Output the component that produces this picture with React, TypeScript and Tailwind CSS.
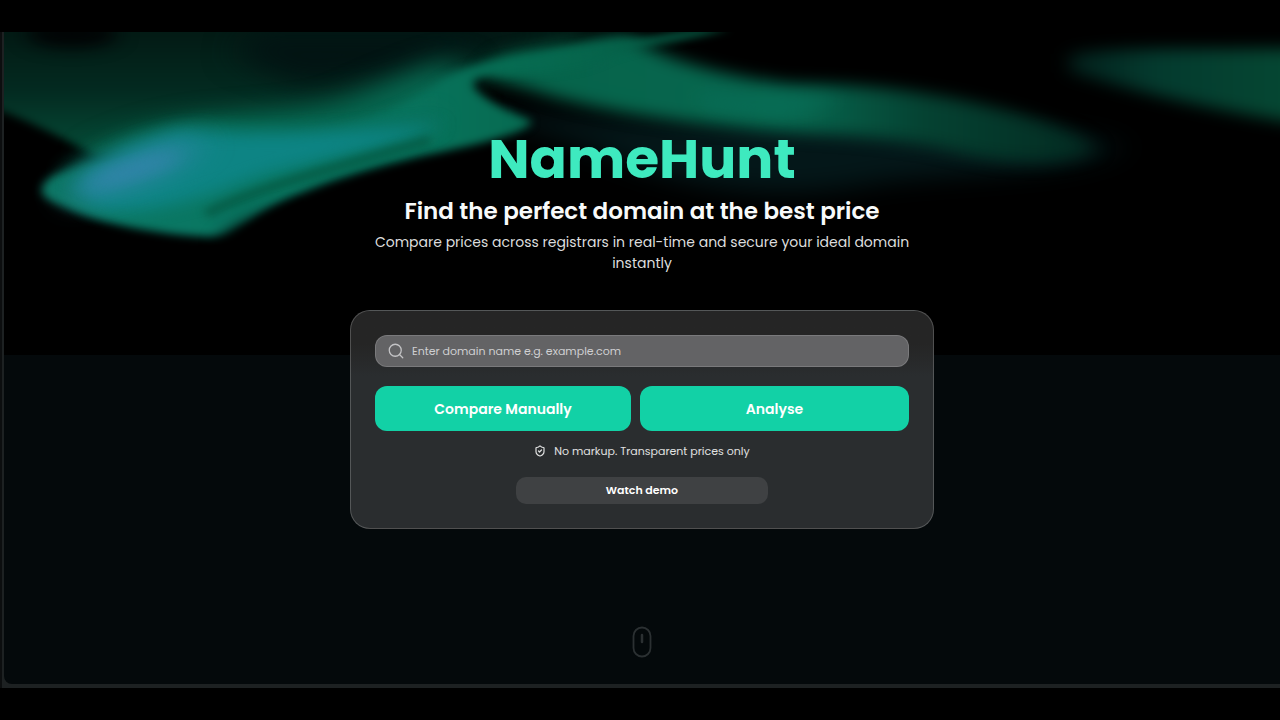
import { Search, ShieldCheck } from "lucide-react";

function Aurora() {
  return (
    <svg
      aria-hidden="true"
      className="absolute inset-x-0 top-0 h-[323px] w-full bg-black"
      viewBox="4 32 1276 323"
      preserveAspectRatio="none"
    >
      <defs>
        <filter id="b4" x="-20%" y="-50%" width="140%" height="200%" colorInterpolationFilters="sRGB">
          <feGaussianBlur stdDeviation="5 4" />
        </filter>
        <filter id="b8" x="-30%" y="-80%" width="160%" height="260%" colorInterpolationFilters="sRGB">
          <feGaussianBlur stdDeviation="10 8" />
        </filter>
        <filter id="b14" x="-50%" y="-100%" width="200%" height="300%" colorInterpolationFilters="sRGB">
          <feGaussianBlur stdDeviation="18 12" />
        </filter>
        <linearGradient id="veil" x1="0" y1="32" x2="0" y2="150" gradientUnits="userSpaceOnUse">
          <stop offset="0" stopColor="#031a14" />
          <stop offset="0.5" stopColor="#032a20" />
          <stop offset="1" stopColor="#054a36" />
        </linearGradient>
        <linearGradient id="body" x1="40" y1="0" x2="700" y2="0" gradientUnits="userSpaceOnUse">
          <stop offset="0" stopColor="#0b7561" />
          <stop offset="0.2" stopColor="#0a7763" />
          <stop offset="0.55" stopColor="#08745d" />
          <stop offset="0.75" stopColor="#066a50" />
          <stop offset="1" stopColor="#055a43" />
        </linearGradient>
        <linearGradient id="ribbon" x1="500" y1="0" x2="1150" y2="0" gradientUnits="userSpaceOnUse">
          <stop offset="0" stopColor="#06634a" />
          <stop offset="0.45" stopColor="#07674f" />
          <stop offset="0.65" stopColor="#054232" />
          <stop offset="0.9" stopColor="#032c22" />
          <stop offset="1" stopColor="#02150f" />
        </linearGradient>
        <linearGradient id="corner" x1="1030" y1="0" x2="1280" y2="0" gradientUnits="userSpaceOnUse">
          <stop offset="0" stopColor="#021413" />
          <stop offset="0.5" stopColor="#043a2e" />
          <stop offset="1" stopColor="#054632" />
        </linearGradient>
      </defs>

      <path
        d="M-30 0H640L560 44L500 62L450 100L260 150L96 156C70 142 40 126 4 112L-30 102Z"
        fill="url(#veil)"
        filter="url(#b4)"
      />
      <ellipse cx="72" cy="34" rx="46" ry="14" fill="#010304" filter="url(#b8)" />
      <path d="M250 30H540L450 56L400 74L300 84L240 60Z" fill="#021413" filter="url(#b14)" />

      <path
        d="M440 100C600 128 700 122 860 120C960 124 1080 130 1120 146C1080 176 960 172 880 182C780 204 680 190 600 150Z"
        fill="#041719"
        filter="url(#b14)"
      />
      <path
        d="M90 156C180 104 260 122 340 102C390 80 420 66 460 56V120L300 160Z"
        fill="#07664f"
        filter="url(#b14)"
      />
      <path
        d="M500 56C560 44 600 36 630 34C650 56 720 76 790 84C860 84 920 90 980 104C1050 120 1084 136 1096 150C1060 168 1000 164 940 148C860 132 800 136 730 127C660 120 600 110 550 96C520 86 500 82 480 76Z"
        fill="url(#ribbon)"
        filter="url(#b8)"
      />
      <path
        d="M690 92C740 100 790 94 840 98C820 116 760 118 710 108Z"
        fill="#08715a"
        opacity="0.6"
        filter="url(#b8)"
      />

      <path
        d="M42 188C48 170 78 166 130 160C170 152 220 144 290 136C350 130 400 108 434 86C452 64 530 52 580 47L640 39L700 28L730 28C690 40 640 46 610 56C580 74 540 72 484 76C456 80 480 100 530 120C538 127 500 140 450 150C380 164 330 180 284 200C250 218 240 236 210 237C150 234 100 222 70 210C52 202 40 198 42 188Z"
        fill="url(#body)"
        filter="url(#b4)"
      />
      <path d="M60 172C100 140 150 128 200 122C290 132 380 120 440 106V130L260 160L100 190Z" fill="#08705c" opacity="0.75" filter="url(#b8)" />
      <path
        d="M76 186C90 162 130 144 180 130C280 138 360 130 440 124C400 146 320 160 260 176C200 200 130 220 92 208Z"
        fill="#0d8484"
        filter="url(#b8)"
      />
      <ellipse
        cx="134"
        cy="170"
        rx="66"
        ry="15"
        fill="#2f84a4"
        transform="rotate(-20 134 170)"
        filter="url(#b14)"
      />
      <ellipse
        cx="132"
        cy="170"
        rx="48"
        ry="6"
        fill="#3584b0"
        opacity="0.7"
        transform="rotate(-18 132 170)"
        filter="url(#b8)"
      />
      <path
        d="M206 214C250 190 340 166 430 140"
        fill="none"
        stroke="#04553f"
        strokeWidth="9"
        opacity="0.8"
        filter="url(#b4)"
      />
      <path d="M218 246C224 232 248 218 284 208L284 246Z" fill="#000" filter="url(#b8)" />

      <path
        d="M1070 54C1120 46 1200 50 1320 48V126C1240 116 1160 98 1070 72Z"
        fill="url(#corner)"
        filter="url(#b8)"
      />
    </svg>
  );
}

function ScrollHint() {
  return (
    <svg aria-hidden="true" width="20" height="32" viewBox="0 0 20 32" fill="none" stroke="#2b3032">
      <rect x="1.5" y="1.5" width="17" height="29" rx="8.5" strokeWidth="1.8" />
      <path d="M10 9v7" strokeWidth="2.5" strokeLinecap="round" />
    </svg>
  );
}

export default function App() {
  return (
    <div className="flex min-h-screen flex-col bg-black py-8 font-['Poppins','Inter',sans-serif] text-white">
      <div className="flex flex-1 flex-col border-l-2 border-[#0c0e0f] bg-[#1d2122] pb-1 pl-0.5">
        <main className="relative flex flex-1 flex-col items-center overflow-hidden rounded-bl-lg bg-[#04090b] px-4 pt-[99px] pb-[26px]">
          <Aurora />

          <header className="relative flex flex-col items-center text-center">
            <h1 className="text-[55px] leading-14 font-bold text-[#3eeabf]">NameHunt</h1>
            <h2 className="mt-2 text-[23px] leading-8 font-semibold text-[#f8fafa]">
              Find the perfect domain at the best price
            </h2>
            <p className="mt-[5px] max-w-[560px] text-[14px] leading-[21px] text-[#dcdddd]">
              Compare prices across registrars in real-time and secure your ideal domain instantly
            </p>
          </header>

          <form
            onSubmit={(e) => e.preventDefault()}
            className="relative mt-9 w-full max-w-[584px] rounded-[20px] border border-white/20 bg-linear-to-b from-[#252525] from-15% to-[#2a2d2f] to-30% p-6"
          >
            <div className="flex h-8 items-center gap-[7px] rounded-xl border border-white/15 bg-[#636365] px-[11px]">
              <label htmlFor="domain">
                <Search aria-hidden="true" className="size-[18px] text-[#c4c4c6]" strokeWidth={1.7} />
              </label>
              <input
                id="domain"
                type="text"
                aria-label="Domain name"
                placeholder="Enter domain name e.g. example.com"
                className="h-full min-w-0 flex-1 bg-transparent text-[11px] text-white outline-none placeholder:text-[#cfcfd1]"
              />
            </div>

            <div className="mt-[19px] grid grid-cols-[256fr_269fr] gap-[9px]">
              <button type="submit" className="h-[45px] rounded-xl bg-[#12d1a6] text-sm font-semibold">
                Compare Manually
              </button>
              <button type="button" className="h-[45px] rounded-xl bg-[#12d1a6] text-sm font-semibold">
                Analyse
              </button>
            </div>

            <p className="mt-3 flex items-center justify-center gap-2 text-[11px] leading-4 text-[#e0e1e1]">
              <ShieldCheck aria-hidden="true" className="size-3" strokeWidth={2.4} />
              No markup. Transparent prices only
            </p>

            <button
              type="button"
              className="mx-auto mt-[18px] block h-[27px] w-[252px] rounded-[10px] bg-[#3f4143] text-[11px] font-semibold"
            >
              Watch demo
            </button>
          </form>

          <div className="mt-auto">
            <ScrollHint />
          </div>
        </main>
      </div>
    </div>
  );
}
